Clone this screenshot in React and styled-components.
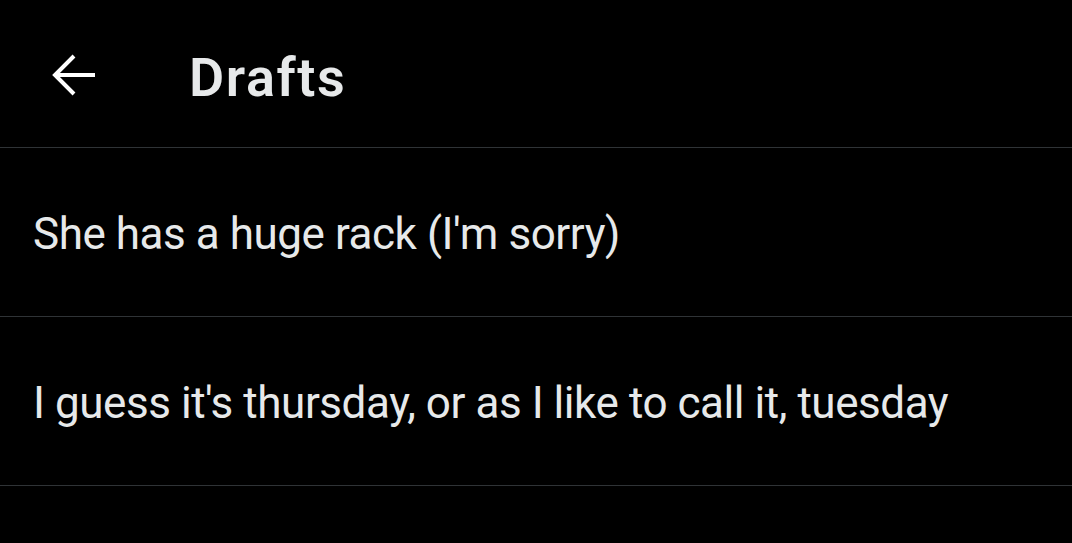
import React from "react";
import styled, { createGlobalStyle } from "styled-components";

const Global = createGlobalStyle`
  html, body { margin: 0; padding: 0; background: #000; }
  body { font-family: Roboto, "Noto Sans", sans-serif; }
`;

const Page = styled.div`
  width: 1072px;
  height: 543px;
  background: #000;
  display: flex;
  flex-direction: column;
  overflow: hidden;
`;

const Header = styled.header`
  height: 148px;
  display: flex;
  align-items: center;
  padding: 0 0 0 50px;
  gap: 91px;
  border-bottom: 1px solid #2f3336;
  box-sizing: border-box;
`;

const BackButton = styled.button`
  background: none;
  border: none;
  padding: 0;
  display: flex;
  color: #fff;
  margin-top: 2px;
`;

const Title = styled.h1`
  margin: 0;
  margin-top: 8px;
  font-size: 54px;
  font-weight: 600;
  color: #e7e9ea;
  letter-spacing: 1.6px;
`;

const Row = styled.div`
  height: 169px;
  display: flex;
  align-items: center;
  padding: 4px 0 0 33px;
  border-bottom: 1px solid #2f3336;
  box-sizing: border-box;
  font-size: 44px;
  color: #e7e9ea;
  letter-spacing: -0.45px;
`;

const drafts = [
  "She has a huge rack (I'm sorry)",
  "I guess it's thursday, or as I like to call it, tuesday",
];

export default function App() {
  return (
    <Page>
      <Global />
      <Header>
        <BackButton aria-label="Back">
          <svg width="48" height="48" viewBox="0 0 24 24" fill="none" stroke="currentColor" strokeWidth="2" strokeLinecap="butt" strokeLinejoin="miter">
            <path d="M2.5 12H22.5M12 2.5L2.5 12L12 21.5" />
          </svg>
        </BackButton>
        <Title>Drafts</Title>
      </Header>
      {drafts.map((d) => (
        <Row key={d}>{d}</Row>
      ))}
    </Page>
  );
}
